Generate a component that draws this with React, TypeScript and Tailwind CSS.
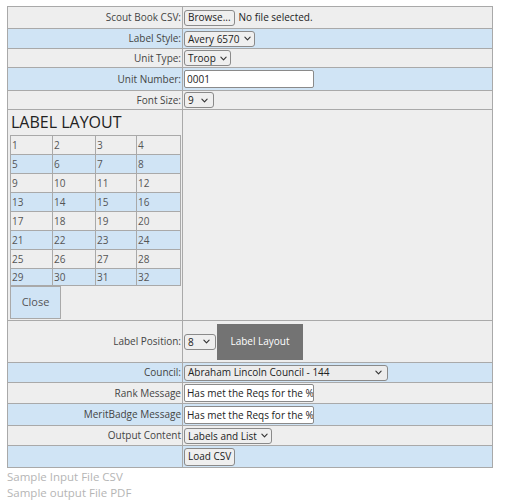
// Scout label generator form — recreated from screenshot

const GRAY = 'bg-[#eeeeee]'
const BLUE = 'bg-[#d0e4f5]'

function Chevron() {
  return (
    <svg className="flex-none ml-[4px]" width="7" height="5" viewBox="0 0 8 5" fill="none" stroke="#333" strokeWidth="1.3" strokeLinecap="round" strokeLinejoin="round">
      <path d="M1 1l3 3 3-3" />
    </svg>
  )
}

function Select({ value, width }: { value: string; width: string }) {
  return (
    <div className={`${width} h-[16px] flex-none flex items-center justify-between pl-[3px] pr-[5px] border border-[#8a8a8a] rounded-[3px] bg-[#efefef] text-[10px] text-[#222] leading-none`}>
      <span className="whitespace-nowrap">{value}</span>
      <Chevron />
    </div>
  )
}

function TextBox({ value }: { value: string }) {
  return (
    <input
      readOnly
      defaultValue={value}
      className="w-[130px] h-[18px] pl-[2px] border border-[#8a8a8a] rounded-[2px] bg-white text-[10px] text-[#222] outline-none"
      style={{ fontFamily: 'inherit' }}
    />
  )
}

function Row({
  label,
  bg,
  h,
  children,
  last = false,
}: {
  label: string
  bg: string
  h: string
  children?: React.ReactNode
  last?: boolean
}) {
  return (
    <div className={`flex ${h} ${bg} ${last ? '' : 'border-b border-[#a9a9a9]'}`}>
      <div className="w-[175px] flex-none flex items-center justify-end pr-[1px] border-r border-[#a9a9a9] text-[10px] text-[#444] whitespace-nowrap">
        {label}
      </div>
      <div className="flex-1 flex items-center pl-[1px] gap-[5px]">{children}</div>
    </div>
  )
}

const cellW = ['w-[42px]', 'w-[43px]', 'w-[41px]', 'w-[44px]']

export default function App() {
  const rows = Array.from({ length: 8 }, (_, r) => [1, 2, 3, 4].map((c) => r * 4 + c))

  return (
    <div className="pl-[7px] pt-[6px] bg-white min-h-[502px] text-[#444]" style={{ fontFamily: '"Open Sans", "Liberation Sans", sans-serif' }}>
      <div className="w-[486px] border border-[#a9a9a9]">
        <Row label="Scout Book CSV:" bg={GRAY} h="h-[22px]">
          <div className="h-[16px] px-[3px] flex items-center border border-[#8a8a8a] rounded-[3px] bg-[#efefef] text-[10px] text-[#222]">Browse...</div>
          <span className="text-[10px] text-[#222] -ml-[1px]">No file selected.</span>
        </Row>
        <Row label="Label Style:" bg={BLUE} h="h-[20px]">
          <Select value="Avery 6570" width="w-[71px]" />
        </Row>
        <Row label="Unit Type:" bg={GRAY} h="h-[19px]">
          <Select value="Troop" width="w-[47px]" />
        </Row>
        <Row label="Unit Number:" bg={BLUE} h="h-[23px]">
          <TextBox value="0001" />
        </Row>
        <Row label="Font Size:" bg={GRAY} h="h-[19px]">
          <Select value="9" width="w-[30px]" />
        </Row>

        {/* label layout panel */}
        <div className={`flex h-[211px] ${GRAY} border-b border-[#a9a9a9]`}>
          <div className="w-[175px] flex-none border-r border-[#a9a9a9] pl-[2px] pt-[2px]">
            <div className="text-[16px] leading-[20px] text-[#222] pl-[1px]">LABEL LAYOUT</div>
            <div className="mt-[3px] border-t border-l border-[#a9a9a9] w-[171px]">
              {rows.map((r, i) => (
                <div key={i} className={`flex ${i === 7 ? 'h-[17px]' : 'h-[19px]'} ${i % 2 ? BLUE : GRAY}`}>
                  {r.map((n, j) => (
                    <div key={n} className={`${cellW[j]} border-r border-b border-[#a9a9a9] pl-[1px] flex items-center text-[10px] text-[#555]`}>
                      {n}
                    </div>
                  ))}
                </div>
              ))}
            </div>
            <div className={`w-[51px] h-[33px] ${BLUE} border border-[#a9a9a9] flex items-center justify-center text-[11px] text-[#555]`}>Close</div>
          </div>
          <div className="flex-1" />
        </div>

        <Row label="Label Position:" bg={GRAY} h="h-[42px]">
          <Select value="8" width="w-[32px]" />
          <div className="-ml-[4px] w-[86px] h-[36px] bg-[#737373] text-white text-[10px] flex items-center justify-center">Label Layout</div>
        </Row>
        <Row label="Council:" bg={BLUE} h="h-[20px]">
          <div className="w-[204px] h-[16px] flex items-center justify-between pl-[3px] pr-[5px] border border-[#8a8a8a] rounded-[3px] bg-[#ececec] text-[10px] text-[#222]">
            <span>Abraham Lincoln Council - 144</span>
            <Chevron />
          </div>
        </Row>
        <Row label="Rank Message" bg={GRAY} h="h-[21px]">
          <TextBox value="Has met the Reqs for the %rank%" />
        </Row>
        <Row label="MeritBadge Message" bg={BLUE} h="h-[22px]">
          <TextBox value="Has met the Reqs for the %mb%" />
        </Row>
        <Row label="Output Content" bg={GRAY} h="h-[20px]">
          <Select value="Labels and List" width="w-[88px]" />
        </Row>
        <Row label="" bg={BLUE} h="h-[21px]" last>
          <div className="h-[18px] px-[3px] flex items-center border border-[#8a8a8a] rounded-[3px] bg-[#efefef] text-[10px] text-[#222]">Load CSV</div>
        </Row>
      </div>
      <div className="pt-[1px] text-[11.5px] leading-[16px] text-[#b5b5b5]">
        <div>Sample Input File CSV</div>
        <div>Sample output File PDF</div>
      </div>
    </div>
  )
}
